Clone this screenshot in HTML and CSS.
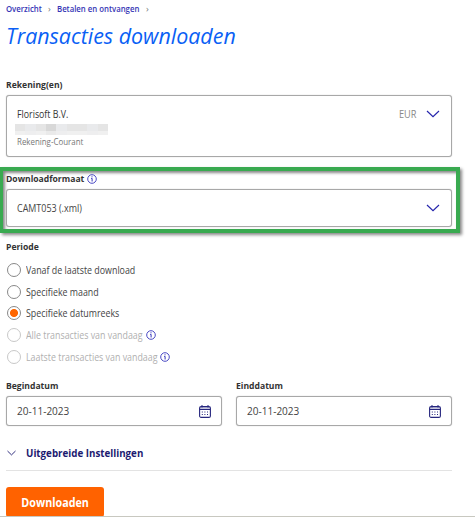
FILE: index.html
```html
<!DOCTYPE html>
<html lang="nl">
<head>
<meta charset="utf-8">
<title>Transacties downloaden</title>
<link rel="stylesheet" href="styles.css">
</head>
<body>
<svg class="defs" width="0" height="0">
  <symbol id="info" viewBox="0 0 10 10"><circle cx="5" cy="5" r="4.3" fill="none" stroke="currentColor" stroke-width=".9"/><path d="M4.1 4.4H5.1V7.5M5 2.3V3.3" fill="none" stroke="currentColor" stroke-width="1"/></symbol>
  <symbol id="chevron" viewBox="0 0 14 8"><path d="M1 1L7 6.6L13 1" fill="none" stroke="currentColor" stroke-width="1.2"/></symbol>
  <symbol id="calendar" viewBox="0 0 12 13"><rect x=".6" y="1.6" width="10.8" height="10.8" rx="1.5" fill="none" stroke="currentColor" stroke-width="1.1"/><path d="M1.1 2.1H10.9V4.5H1.1Z" fill="currentColor" opacity=".25"/><path d="M.6 4.5H11.4M3 0V2.5M9 0V2.5" fill="none" stroke="currentColor" stroke-width="1"/><path d="M2.8 7H9.5M2.8 9.5H9.5" fill="none" stroke="currentColor" stroke-width="1" stroke-dasharray="1 1.6"/></symbol>
</svg>
<main class="page">
  <nav class="crumbs"><a class="crumb first">Overzicht</a><span class="sep">›</span><a class="crumb second">Betalen en ontvangen</a><span class="sep">›</span></nav>
  <h1 class="title"><span>Transacties downloaden</span></h1>

  <h2 class="label account-label"><span>Rekening(en)</span></h2>
  <section class="box account">
    <div class="account-text">
      <div class="name"><span>Florisoft B.V.</span></div>
      <div class="mask"><i></i><i></i><i></i><i></i><i></i><i></i><i></i><i></i><i></i></div>
      <div class="kind"><span>Rekening-Courant</span></div>
    </div>
    <div class="currency"><span>EUR</span></div>
    <svg class="chevron"><use href="#chevron"/></svg>
  </section>

  <section class="highlight">
    <h2 class="label format-label"><span>Downloadformaat</span><svg class="info"><use href="#info"/></svg></h2>
    <div class="box format"><div class="format-value"><span>CAMT053 (.xml)</span></div><svg class="chevron"><use href="#chevron"/></svg></div>
  </section>

  <h2 class="label period-label"><span>Periode</span></h2>
  <div class="radios">
    <label class="option"><i class="radio"></i><span>Vanaf de laatste download</span></label>
    <label class="option"><i class="radio"></i><span>Specifieke maand</span></label>
    <label class="option"><i class="radio on"></i><span>Specifieke datumreeks</span></label>
    <label class="option off"><i class="radio"></i><span class="today">Alle transacties van vandaag</span><svg class="info"><use href="#info"/></svg></label>
    <label class="option off"><i class="radio"></i><span class="latest">Laatste transacties van vandaag</span><svg class="info"><use href="#info"/></svg></label>
  </div>

  <div class="dates">
    <div><h2 class="label"><span>Begindatum</span></h2><div class="box date"><span>20-11-2023</span><svg class="calendar"><use href="#calendar"/></svg></div></div>
    <div><h2 class="label"><span>Einddatum</span></h2><div class="box date"><span>20-11-2023</span><svg class="calendar"><use href="#calendar"/></svg></div></div>
  </div>

  <div class="advanced"><svg class="small-chevron" viewBox="0 0 9 6"><path d="M.5 1L4.5 4.9L8.5 1" fill="none" stroke="currentColor" stroke-width=".9"/></svg><span>Uitgebreide Instellingen</span></div>
  <button class="download"><span>Downloaden</span></button>
</main>
</body>
</html>
```
FILE: styles.css
```css
* { box-sizing: border-box; }
body { margin: 0; background: #fff; color: #444; font: 10px/14px "Open Sans", "Noto Sans", sans-serif; white-space: nowrap; }
.defs { display: block; height: 0; }
.page { height: 517px; padding-left: 6px; overflow: hidden; border-bottom: 1px solid #c8c8c0; }
.page span { display: inline-block; transform-origin: 0 50%; }
.crumbs { display: flex; height: 18px; padding-top: 2px; color: #3535b5; font-size: 8.2px; font-weight: 600; }
.crumb { transform: scaleX(.95); transform-origin: 0 50%; }
.first { width: 36px; }
.second { width: 83px; }
.sep { width: 15px; padding-left: 6px; color: #777; font-size: 9px; font-weight: 400; }
.title { height: 61px; margin: 0; color: #0a5ff5; font-size: 22.4px; font-style: italic; font-weight: 400; line-height: 36px; }
.title span { transform: scaleX(.957); }
.label { height: 14px; margin: 0; color: #333; font-size: 9.4px; font-weight: 700; line-height: 14px; }
.label span { transform: scaleX(.916); }
.account-label { height: 16px; margin-top: -1px; }
.box { display: flex; width: 446px; border: 1px solid #a8a8a8; border-radius: 3px; background: #fff; box-shadow: 0 0 1px #aaa; }
.account { height: 62px; margin-top: 1px; padding: 11px 11px 0 10px; }
.account-text { flex: 1; }
.name { height: 17px; color: #333; }
.name span { transform: scaleX(.88); }
.mask { display: flex; width: 93px; height: 11px; margin-left: -2px; }
.mask i { flex: 1; background: linear-gradient(#e5e5e5 60%, #f0f0f0 60%); }
.mask i:nth-child(3n + 2) { background: linear-gradient(#e9eaec 60%, #eeeeef 60%); }
.mask i:nth-child(4) { background: linear-gradient(#d8d8d8 60%, #eaeaea 60%); }
.kind { height: 14px; color: #777; font-size: 8.5px; }
.kind span { transform: scaleX(.93); }
.currency { width: 27px; color: #888; font-size: 10px; }
.currency span { transform: scaleX(.92); }
.chevron { width: 14px; height: 8px; margin-top: 3px; color: #2525ac; }
.highlight { width: 460px; height: 66px; margin: 10px 0 0 -6px; padding: 1px 0 0 3px; border: 4px solid #39aa50; border-left-width: 3px; box-shadow: 2px 2px 3px #888, inset 2px 2px 3px #888; }
.format-label { display: flex; height: 17px; }
.format-label span { width: 78px; }
.info { width: 10px; height: 10px; margin: 2px 0 0 3px; color: #3737bd; }
.format { height: 38px; padding: 11px 11px 0 10px; }
.format-value { flex: 1; }
.format-value span { transform: scaleX(.895); }
.period-label { margin-top: 7px; height: 19px; }
.option { display: flex; align-items: center; height: 21.7px; }
.option span { transform: scaleX(.885); }
.option .today { width: 117px; }
.option .latest { width: 131px; }
.radio { flex: none; width: 14px; height: 14px; margin: 0 5.5px 0 .5px; border: 1px solid #888; border-radius: 50%; }
.on { background: radial-gradient(circle, #f60 3.6px, transparent 4.4px); }
.off { color: #b0b0b0; }
.off .radio { border-color: #c8c8c8; }
.off .info { margin-top: 0; }
.dates { display: flex; gap: 14px; margin-top: 12px; }
.date { width: 216px; height: 30px; margin-top: 3px; padding: 7px 10px 0 10px; }
.date span { flex: 1; font-size: 10.5px; transform: scaleX(.955); }
.calendar { flex: none; width: 12px; height: 13px; margin-top: 1px; color: #26267e; }
.advanced { display: flex; align-items: center; width: 446px; height: 45px; padding-top: 9px; border-bottom: 1px solid #e3e3e3; color: #1c1a70; font-size: 10.5px; font-weight: 700; }
.advanced span { transform: scaleX(.93); }
.small-chevron { width: 9px; height: 6px; margin: 0 10px 0 1px; }
.download { display: block; width: 98px; height: 30px; margin-top: 16px; padding: 0; border: 0; border-radius: 3px; background: #ff6200; color: #fff; font: 700 11.5px/29px "Open Sans", sans-serif; }
.download span { transform: scaleX(.935); transform-origin: 50% 50%; }
```
